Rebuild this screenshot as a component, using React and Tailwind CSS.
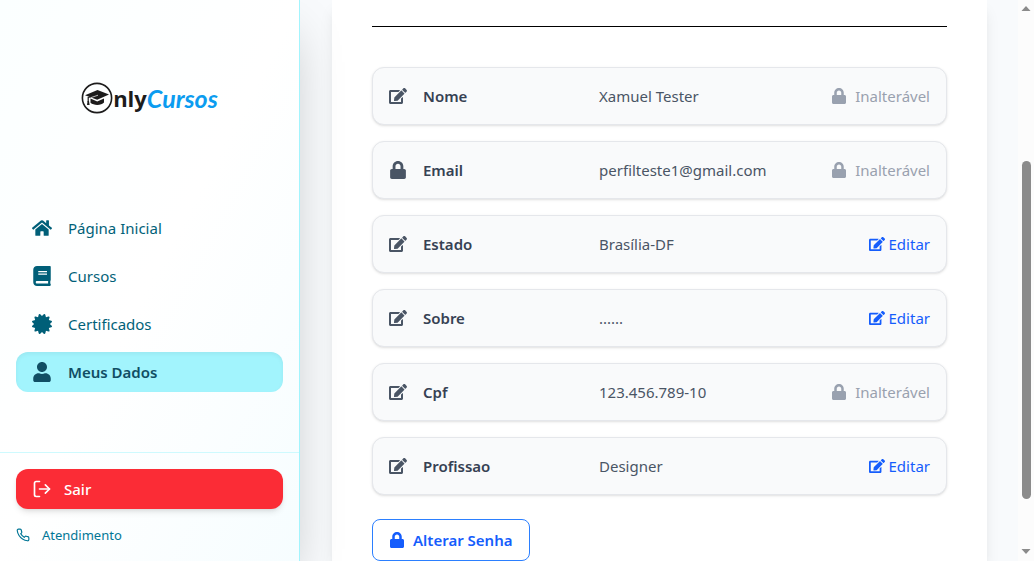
import React from "react";
import { FaHome, FaBook, FaUser, FaLock, FaEdit, FaCertificate } from "react-icons/fa";
import { FiLogOut, FiPhone } from "react-icons/fi";

const links = [
  { label: "Página Inicial", Icon: FaHome },
  { label: "Cursos", Icon: FaBook },
  { label: "Certificados", Icon: FaCertificate },
  { label: "Meus Dados", Icon: FaUser, active: true },
];

const fields = [
  { label: "Nome", value: "Xamuel Tester", locked: true, Icon: FaEdit },
  { label: "Email", value: "perfilteste1@gmail.com", locked: true, Icon: FaLock },
  { label: "Estado", value: "Brasília-DF", Icon: FaEdit },
  { label: "Sobre", value: "......", Icon: FaEdit },
  { label: "Cpf", value: "123.456.789-10", locked: true, Icon: FaEdit },
  { label: "Profissao", value: "Designer", Icon: FaEdit },
];

function CapBadge() {
  return (
    <svg viewBox="0 0 32 32" className="size-8 shrink-0 text-[#1c1c1c]" aria-hidden="true">
      <circle cx="16" cy="16" r="14.6" fill="none" stroke="currentColor" strokeWidth="1.6" />
      <path d="M4 13.2 L16.5 8 L28 12.4 L16.2 17.8 Z" fill="currentColor" />
      <path d="M9.5 16.6 L16.2 19.4 L23 16.4 V20.6 C20.5 23.6 12.8 23.8 9.5 20.8 Z" fill="currentColor" />
      <path d="M16.5 12.8 L7.2 15.4 V20" fill="none" stroke="currentColor" strokeWidth="1.2" />
      <path d="M6.6 19 H8 L8.6 23 H6 Z" fill="currentColor" />
      <path d="M10 15.6 L17 13.2" stroke="#fff" strokeWidth="0.7" />
    </svg>
  );
}

function Logo() {
  return (
    <div className="flex h-8 items-center justify-center">
      <CapBadge />
      <span className="font-['Open_Sans',sans-serif] text-[22px] leading-7 font-bold text-[#1c1c1c]">nly</span>
      <span className="font-['Lato',sans-serif] text-[25px] leading-7 font-bold text-[#0b9cf0] italic">Cursos</span>
    </div>
  );
}

function Sidebar() {
  return (
    <aside className="z-10 flex w-[300px] shrink-0 flex-col border-r border-[#a2f4fd] bg-linear-to-br from-[#fbffff] via-white to-[#f6fdff] shadow-2xl">
      <div className="pt-[82px] pb-[94px]">
        <Logo />
      </div>
      <nav className="flex grow flex-col gap-2 px-4">
        {links.map(({ label, Icon, active }) => (
          <a
            key={label}
            href="#"
            className={
              active
                ? "flex h-10 items-center gap-4 rounded-xl bg-[#a2f4fd] px-4 font-semibold text-cyan-900 inset-shadow-sm"
                : "flex h-10 items-center gap-4 rounded-xl px-4 text-cyan-800"
            }
          >
            <Icon className="size-5" />
            {label}
          </a>
        ))}
      </nav>
      <div className="flex flex-col gap-4 border-t border-cyan-100 p-4">
        <button type="button" className="flex h-10 items-center gap-3 rounded-xl bg-[#fb2c36] px-4 font-medium text-white shadow-md">
          <FiLogOut className="size-5" />
          Sair
        </button>
        <a href="#" className="flex items-center gap-3 text-[13px] leading-5 text-cyan-700">
          <FiPhone className="size-[14px]" />
          Atendimento
        </a>
      </div>
    </aside>
  );
}

function FieldRow({ label, value, locked, Icon }) {
  return (
    <li className="flex items-center gap-4 rounded-xl border border-gray-200 bg-gray-50 p-4 shadow-sm">
      <Icon className="size-[18px] shrink-0 text-gray-600" />
      <span className="w-40 shrink-0 font-semibold text-gray-700">{label}</span>
      <span className="grow text-gray-600">{value}</span>
      {locked ? (
        <span className="flex items-center gap-2 text-gray-400">
          <FaLock className="size-4" />
          Inalterável
        </span>
      ) : (
        <button type="button" className="flex items-center gap-1 text-blue-600">
          <FaEdit className="size-4" />
          Editar
        </button>
      )}
    </li>
  );
}

function ScrollRail() {
  return (
    <div className="flex w-4 shrink-0 flex-col items-center bg-[#fcfcfc] text-[#8b8b8b]" aria-hidden="true">
      <svg viewBox="0 0 16 16" className="size-4 shrink-0" fill="currentColor">
        <path d="M8 6l4.5 5h-9z" />
      </svg>
      <div className="flex grow flex-col py-px">
        <div className="grow-[144]" />
        <div className="w-[9px] grow-[338] rounded-full bg-[#8b8b8b]" />
        <div className="grow-[45]" />
      </div>
      <svg viewBox="0 0 16 16" className="size-4 shrink-0" fill="currentColor">
        <path d="M8 9l4.5-5h-9z" />
      </svg>
    </div>
  );
}

export default function App() {
  return (
    <div className="flex h-screen overflow-hidden bg-[#f8fafc] font-['Noto_Sans',sans-serif] text-[15px] leading-6">
      <Sidebar />
      <main className="flex min-w-0 grow flex-col px-8 pr-[31px]">
        <section className="grow bg-white px-10 pt-[26px] shadow-lg">
          <hr className="border-black" />
          <ul className="mt-10 flex flex-col gap-4">
            {fields.map((field) => (
              <FieldRow key={field.label} {...field} />
            ))}
          </ul>
          <button
            type="button"
            className="mt-6 flex items-center gap-2 rounded-lg border border-blue-500 bg-white px-4 py-2 font-semibold text-blue-600"
          >
            <FaLock className="size-4" />
            Alterar Senha
          </button>
        </section>
      </main>
      <ScrollRail />
    </div>
  );
}
